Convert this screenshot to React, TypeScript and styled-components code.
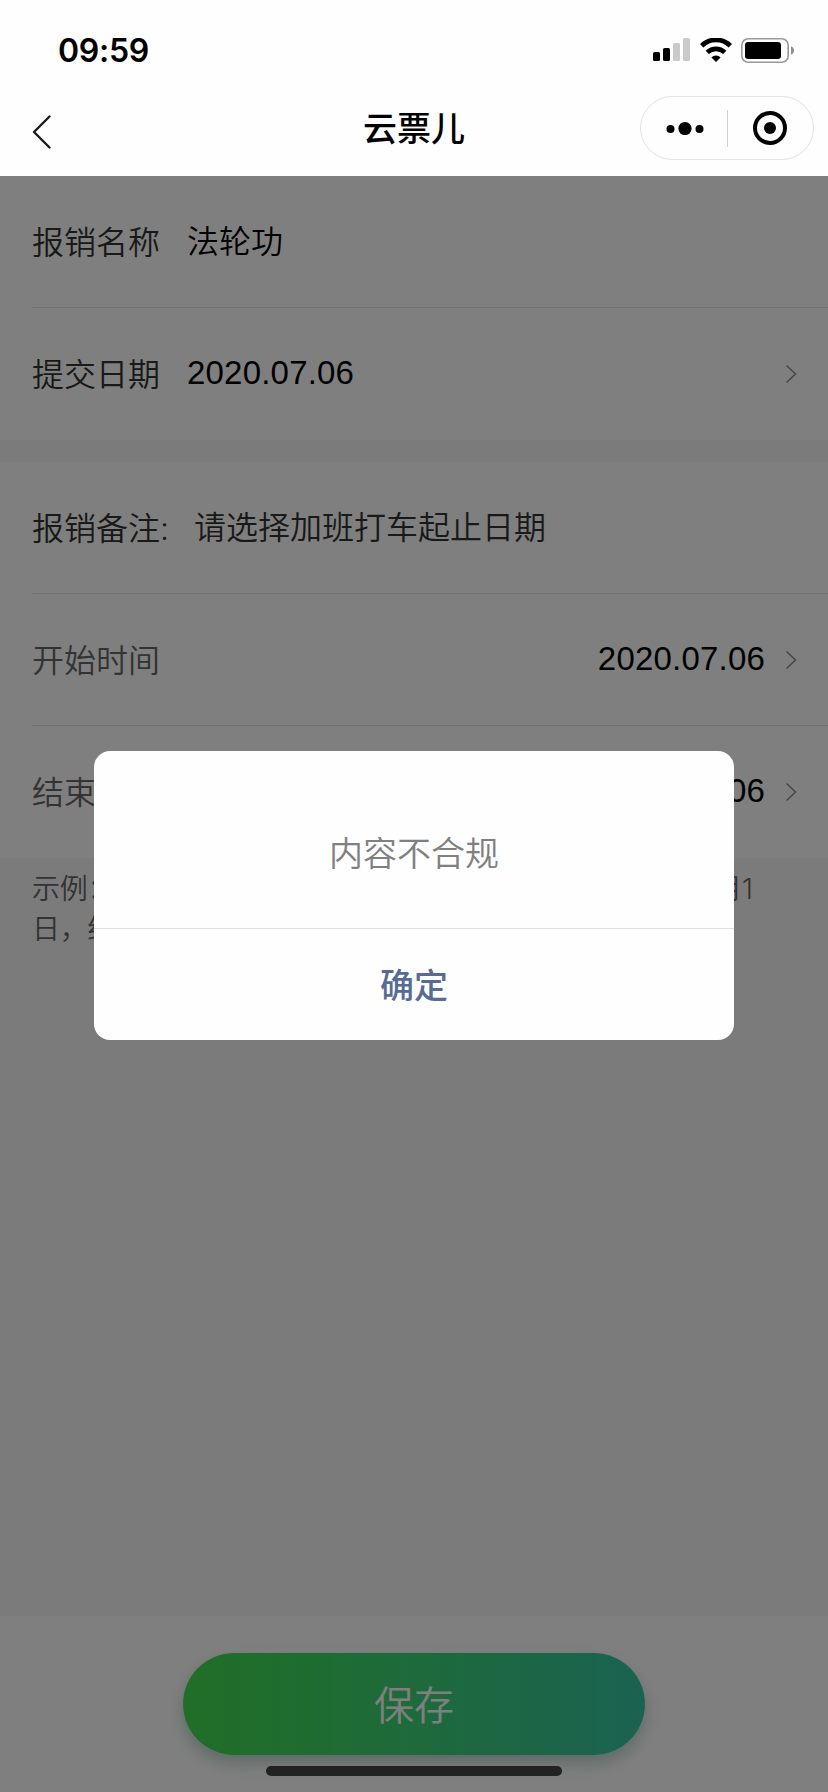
import React from 'react';
import styled, { createGlobalStyle } from 'styled-components';

const GlobalStyle = createGlobalStyle`
  * { box-sizing: border-box; }
  body {
    margin: 0;
    background: #f7f7f7;
    font-family: Inter, 'Noto Sans CJK SC', sans-serif;
    -webkit-font-smoothing: antialiased;
  }
`;

const Screen = styled.div`
  position: relative;
  display: flex;
  flex-direction: column;
  width: 828px;
  height: 1792px;
  overflow: hidden;
  background: #f7f7f7;
`;

const Header = styled.header`
  position: relative;
  z-index: 2;
  flex: none;
  height: 176px;
  background: #fefefe;
`;

const StatusBar = styled.div`
  display: flex;
  align-items: center;
  justify-content: space-between;
  height: 96px;
  padding: 4px 34px 0 58px;
`;

const Clock = styled.span`
  font-size: 32px;
  font-weight: 600;
  line-height: 40px;
  letter-spacing: -0.3px;
  padding-top: 1px;
  color: #000;
`;

const StatusIcons = styled.div`
  display: flex;
  align-items: center;
  gap: 9px;
  svg { display: block; }
`;

const NavBar = styled.div`
  display: grid;
  grid-template-columns: 1fr auto 1fr;
  align-items: center;
  height: 64px;
  padding: 0 14px;
`;

const BackIcon = styled.svg`
  display: block;
  margin: 7px 0 0 18px;
`;

const Title = styled.h1`
  margin: 0;
  padding-top: 2px;
  font-size: 34px;
  font-weight: 500;
  line-height: 48px;
  color: #000;
`;

const Capsule = styled.div`
  justify-self: end;
  display: flex;
  align-items: center;
  width: 174px;
  height: 64px;
  border: 1px solid #e3e3e3;
  border-radius: 32px;
`;

const CapsuleButton = styled.div`
  flex: 1;
  display: flex;
  justify-content: center;
  svg { display: block; }
`;

const CapsuleDivider = styled.i`
  width: 1px;
  height: 37px;
  background: #cfcfcf;
`;

const Group = styled.section`
  flex: none;
  margin-bottom: 22px;
  padding-left: 32px;
  background: #fff;
`;

const Row = styled.div<{ $last?: boolean }>`
  display: flex;
  align-items: center;
  height: 132px;
  padding-right: 31px;
  border-bottom: ${(p) => (p.$last ? 'none' : '1px solid #e5e5e5')};
`;

const Label = styled.span<{ $color?: string; $gap?: number }>`
  margin-right: ${(p) => p.$gap ?? 27}px;
  padding-top: 2px;
  font-size: 32px;
  font-weight: 350;
  line-height: 44px;
  color: ${(p) => p.$color ?? '#333'};
`;

const Value = styled.span<{ $color?: string; $end?: boolean }>`
  margin: ${(p) => (p.$end ? '0 20px 0 auto' : '0')};
  font-size: 32px;
  font-weight: 350;
  line-height: 44px;
  color: ${(p) => p.$color ?? '#000'};
`;

const DateValue = styled(Value)`
  padding-bottom: 2px;
  font-family: 'Liberation Sans', sans-serif;
  font-size: 33px;
  letter-spacing: 0.2px;
`;

const Chevron = styled.svg<{ $push?: boolean }>`
  display: block;
  flex: none;
  margin-left: ${(p) => (p.$push ? 'auto' : '0')};
`;

const Hint = styled.p`
  margin: -11px 0 0;
  padding: 0 32px;
  font-size: 28px;
  font-weight: 350;
  line-height: 40px;
  letter-spacing: -0.25px;
  white-space: nowrap;
  color: #666;
`;

const Footer = styled.footer`
  display: flex;
  justify-content: center;
  align-items: flex-start;
  height: 176px;
  margin-top: auto;
  padding-top: 37px;
  background: #fff;
`;

const SaveButton = styled.button`
  width: 462px;
  height: 102px;
  padding: 0 0 2px;
  border: 0;
  border-radius: 51px;
  background: linear-gradient(90deg, #42dc50 0%, #3fda5c 20%, #3cd578 50%, #36c5a3 100%);
  box-shadow: 0 8px 16px rgba(30, 120, 100, 0.3);
  font-family: inherit;
  font-size: 40px;
  font-weight: 350;
  color: #fff;
`;

const Mask = styled.div`
  position: absolute;
  z-index: 1;
  inset: 0;
  display: flex;
  justify-content: center;
  align-items: flex-start;
  padding-top: 751px;
  background: rgba(0, 0, 0, 0.5);
`;

const Dialog = styled.div`
  width: 640px;
  height: 289px;
  border-radius: 16px;
  background: #fefefe;
  text-align: center;
`;

const DialogBody = styled.div`
  height: 178px;
  padding-top: 79px;
  border-bottom: 1px solid #e0e0e0;
  font-size: 34px;
  line-height: 48px;
  font-weight: 350;
  color: #808080;
`;

const DialogAction = styled.div`
  padding-top: 33px;
  font-size: 34px;
  font-weight: 500;
  line-height: 48px;
  color: #576b95;
`;

const HomeIndicator = styled.div`
  position: absolute;
  z-index: 3;
  left: 266px;
  bottom: 16px;
  width: 296px;
  height: 10px;
  border-radius: 5px;
  background: #222;
`;

const Arrow = ({ push }: { push?: boolean }) => (
  <Chevron $push={push} width="12" height="20" viewBox="0 0 12 20" fill="none" stroke="#8c8c8c" strokeWidth="1.5">
    <path d="M1.5 1.5L10.5 10L1.5 18.5" />
  </Chevron>
);

const SignalIcon = () => (
  <svg width="38" height="24" viewBox="0 0 38 24">
    <rect x="0" y="14" width="7" height="9" rx="1.6" />
    <rect x="10" y="10" width="7" height="13" rx="1.6" />
    <rect x="20" y="5" width="7" height="18" rx="1.6" fill="#cacaca" />
    <rect x="30" y="0" width="7" height="23" rx="1.6" fill="#cacaca" />
  </svg>
);

const WifiIcon = () => (
  <svg width="32" height="24" viewBox="0 0 32 24" fill="none" stroke="#000" strokeWidth="4.8">
    <path d="M1.7 8A20.5 20.5 0 0 1 30.3 8" transform="translate(0 -0.3)" />
    <path d="M7.3 14.4A12.4 12.4 0 0 1 24.7 14.4" />
    <path d="M11.4 19.4A6.3 6.3 0 0 1 20.6 19.4L16 24Z" fill="#000" stroke="none" />
  </svg>
);

const BatteryIcon = () => (
  <svg width="53" height="25" viewBox="0 0 53 25">
    <rect x="0.8" y="0.8" width="46.4" height="23.4" rx="6.4" fill="none" stroke="#999" strokeWidth="1.6" />
    <rect x="4" y="4" width="36" height="17" rx="3.2" />
    <path d="M50 8.3C52.2 9.2 53 10.8 53 12.5S52.2 15.8 50 16.7Z" fill="#8f8f8f" />
  </svg>
);

export default function App() {
  return (
    <Screen>
      <GlobalStyle />
      <Header>
        <StatusBar>
          <Clock>09:59</Clock>
          <StatusIcons>
            <SignalIcon />
            <WifiIcon />
            <BatteryIcon />
          </StatusIcons>
        </StatusBar>
        <NavBar>
          <BackIcon width="20" height="34" viewBox="0 0 20 34" fill="none" stroke="#1a1a1a" strokeWidth="2.4" strokeLinecap="round" strokeLinejoin="round">
            <path d="M17.5 1.5L2 17L17.5 32.5" />
          </BackIcon>
          <Title>云票儿</Title>
          <Capsule>
            <CapsuleButton>
              <svg width="38" height="14" viewBox="0 0 38 14" overflow="visible">
                <circle cx="5.5" cy="8" r="4" />
                <circle cx="20" cy="7.5" r="6.6" />
                <circle cx="34.5" cy="8" r="4" />
              </svg>
            </CapsuleButton>
            <CapsuleDivider />
            <CapsuleButton>
              <svg width="34" height="34" viewBox="0 0 34 34">
                <circle cx="17" cy="17" r="15" fill="none" stroke="#000" strokeWidth="4" />
                <circle cx="17" cy="17" r="6" />
              </svg>
            </CapsuleButton>
          </Capsule>
        </NavBar>
      </Header>

      <Group>
        <Row>
          <Label>报销名称</Label>
          <Value>法轮功</Value>
        </Row>
        <Row $last>
          <Label>提交日期</Label>
          <DateValue>2020.07.06</DateValue>
          <Arrow push />
        </Row>
      </Group>

      <Group>
        <Row>
          <Label $gap={25}>报销备注:</Label>
          <Value $color="#333">请选择加班打车起止日期</Value>
        </Row>
        <Row>
          <Label $color="#666">开始时间</Label>
          <DateValue $end>2020.07.06</DateValue>
          <Arrow />
        </Row>
        <Row $last>
          <Label $color="#666">结束时间</Label>
          <DateValue $end>2020.07.06</DateValue>
          <Arrow />
        </Row>
      </Group>

      <Hint>
        示例：如需报销6月1日加班打车费用，则开始时间选择6月1
        <br />
        日，结束时间选择6月1日
      </Hint>

      <Footer>
        <SaveButton>保存</SaveButton>
      </Footer>

      <Mask>
        <Dialog role="dialog">
          <DialogBody>内容不合规</DialogBody>
          <DialogAction>确定</DialogAction>
        </Dialog>
      </Mask>
      <HomeIndicator />
    </Screen>
  );
}
